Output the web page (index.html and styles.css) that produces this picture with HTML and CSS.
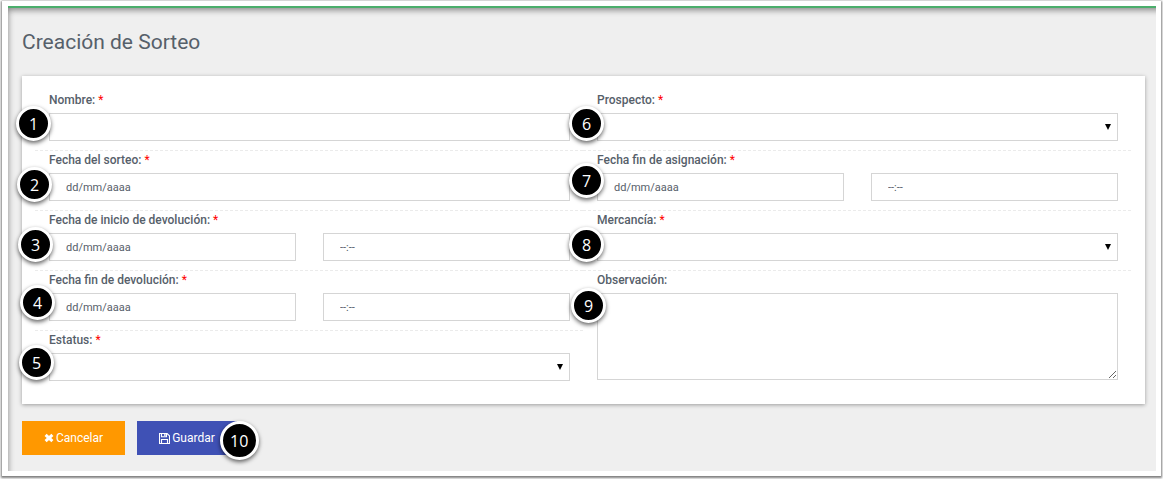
FILE: index.html
```html
<!DOCTYPE html>
<html lang="es">
<head>
<meta charset="utf-8">
<title>Creación de Sorteo</title>
<link rel="stylesheet" href="styles.css">
</head>
<body>
<div class="frame">
<main class="page">
  <h1 class="title">Creación de Sorteo</h1>
  <form class="form">
    <div class="card">
      <div class="column">
        <div class="field">
          <label class="label" for="nombre">Nombre: <span class="required">*</span></label>
          <input class="control" id="nombre" type="text">
          <span class="badge step-1">1</span>
        </div>
        <div class="field">
          <label class="label" for="sorteo">Fecha del sorteo: <span class="required">*</span></label>
          <input class="control" id="sorteo" type="text" placeholder="dd/mm/aaaa">
          <span class="badge step-2">2</span>
        </div>
        <div class="field">
          <label class="label" for="inicio">Fecha de inicio de devolución: <span class="required">*</span></label>
          <div class="pair">
            <input class="control" id="inicio" type="text" placeholder="dd/mm/aaaa">
            <input class="control" type="text" placeholder="--:--" aria-label="Hora de inicio de devolución">
          </div>
          <span class="badge step-3">3</span>
        </div>
        <div class="field">
          <label class="label" for="fin">Fecha fin de devolución: <span class="required">*</span></label>
          <div class="pair">
            <input class="control" id="fin" type="text" placeholder="dd/mm/aaaa">
            <input class="control" type="text" placeholder="--:--" aria-label="Hora fin de devolución">
          </div>
          <span class="badge step-4">4</span>
        </div>
        <div class="field">
          <label class="label" for="estatus">Estatus: <span class="required">*</span></label>
          <div class="select"><select class="control" id="estatus"><option></option></select></div>
          <span class="badge step-5">5</span>
        </div>
      </div>
      <div class="column">
        <div class="field">
          <label class="label" for="prospecto">Prospecto: <span class="required">*</span></label>
          <div class="select"><select class="control" id="prospecto"><option></option></select></div>
          <span class="badge step-6">6</span>
        </div>
        <div class="field">
          <label class="label" for="asignacion">Fecha fin de asignación: <span class="required">*</span></label>
          <div class="pair">
            <input class="control" id="asignacion" type="text" placeholder="dd/mm/aaaa">
            <input class="control" type="text" placeholder="--:--" aria-label="Hora fin de asignación">
          </div>
          <span class="badge step-7">7</span>
        </div>
        <div class="field">
          <label class="label" for="mercancia">Mercancía: <span class="required">*</span></label>
          <div class="select"><select class="control" id="mercancia"><option></option></select></div>
          <span class="badge step-8">8</span>
        </div>
        <div class="field">
          <label class="label" for="observacion">Observación:</label>
          <textarea class="control area" id="observacion"></textarea>
          <span class="badge step-9">9</span>
        </div>
      </div>
    </div>
    <div class="actions">
      <button class="button cancel" type="button">
        <svg class="cross" viewBox="0 0 10 10" aria-hidden="true"><path d="M1.6 1.8 8.4 8.2M8.4 1.8 1.6 8.2" fill="none" stroke="currentColor" stroke-width="3"/></svg>
        Cancelar
      </button>
      <div class="save-wrap">
        <button class="button save" type="button">
          <svg class="disk" viewBox="0 0 11 11" aria-hidden="true"><path d="M.5.5h7.6l2.4 2.4v7.6H.5zM2.5.5v3.2h5V.5M2.5 10.5v-4h6v4" fill="none" stroke="currentColor" stroke-width="1.1"/><path d="M5.2 1h1.4v2H5.2z" fill="currentColor"/></svg>
          Guardar
        </button>
        <span class="badge large step-10">10</span>
      </div>
    </div>
  </form>
</main>
</div>
</body>
</html>
```
FILE: styles.css
```css
* { box-sizing: border-box; }

body {
  margin: 0;
  padding: 1px 2px 3px;
  background: #fff;
  font-family: Roboto, "Liberation Sans", sans-serif;
  font-size: 12px;
  color: #56606a;
}

.frame {
  padding: 5px 5px 5px 6px;
  background: #fff;
  box-shadow: 0 1px 2px 1px rgba(0, 0, 0, .5);
}

.page {
  padding: 23px 11px 16px 14px;
  border-top: 2px solid #4bae6c;
  background: #efefef;
  box-shadow: inset 6px 8px 6px -6px rgba(0, 0, 0, .45);
}

.title {
  margin: 0 0 23px;
  font-size: 21px;
  line-height: 22px;
  font-weight: 400;
}

.card {
  display: flex;
  padding: 15px 14px 23px 13px;
  background: #fff;
  box-shadow: 0 1px 4px rgba(0, 0, 0, .35);
}

.column { flex: 1; min-width: 0; }

.field {
  position: relative;
  padding: 0 13px 9px 14px;
  border-bottom: 1px dashed #ebebeb;
}

.field:last-child { padding-bottom: 0; border-bottom: 0; }

.label {
  display: block;
  margin-bottom: 4px;
  line-height: 18px;
  font-weight: 500;
}

.required { color: #f00; font-weight: 400; }

.control {
  display: block;
  width: 100%;
  min-width: 0;
  height: 28px;
  margin: 0;
  padding: 0 16px;
  border: 1px solid #d5d5d5;
  border-radius: 0;
  background: #fff;
  color: inherit;
  font-family: inherit;
  font-size: 11px;
}

.control::placeholder { color: #56606a; opacity: 1; }

.pair {
  display: grid;
  grid-template-columns: 1fr 1fr;
  gap: 27px;
}

.select { position: relative; }

.select .control { appearance: none; }

.select::after {
  content: "";
  position: absolute;
  top: 11px;
  right: 7px;
  width: 6px;
  height: 6px;
  background: #000;
  clip-path: polygon(0 0, 100% 0, 50% 100%);
  pointer-events: none;
}

.area { height: 87px; resize: vertical; }

.badge {
  position: absolute;
  z-index: 1;
  display: flex;
  align-items: center;
  justify-content: center;
  width: 35px;
  height: 35px;
  border: 3px solid #fff;
  border-radius: 50%;
  background: #000;
  box-shadow: 0 2px 4px rgba(0, 0, 0, .6);
  color: #fff;
  font-family: "Open Sans", sans-serif;
  font-size: 16px;
  line-height: 20px;
}

.large { width: 39px; height: 39px; }

.step-1 { top: 15px; left: -19px; }
.step-2 { top: 16px; left: -18px; }
.step-3 { top: 16px; left: -17px; }
.step-4 { top: 14px; left: -15px; }
.step-5 { top: 14px; left: -16px; }
.step-6 { top: 15px; left: -14px; }
.step-7 { top: 12px; left: -14px; }
.step-8 { top: 16px; left: -14px; }
.step-9 { top: 17px; left: -12px; }
.step-10 { top: 0; right: -22px; }

.actions { display: flex; gap: 12px; margin-top: 17px; }

.save-wrap { position: relative; }

.button {
  display: flex;
  align-items: center;
  justify-content: center;
  gap: 2px;
  height: 34px;
  padding: 0 22px;
  border: 0;
  color: #fff;
  font-family: inherit;
  font-size: 12px;
  font-weight: 400;
}

.cancel { background: #ff9800; }
.save { background: #3f51b5; }

.cross { width: 10px; height: 10px; }
.disk { width: 11px; height: 11px; }
```
